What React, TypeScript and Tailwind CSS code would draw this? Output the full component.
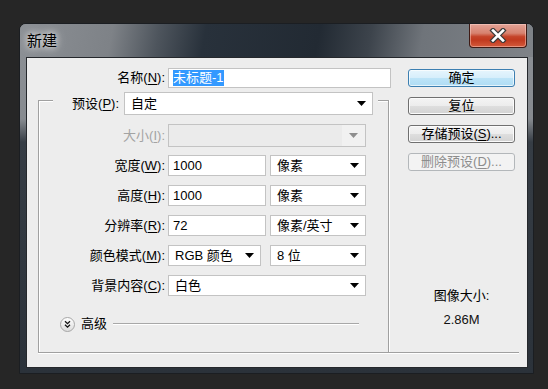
import React from "react";

const F = "font-['Liberation_Sans','Noto_Sans_CJK_SC',sans-serif]";

function Arrow({ disabled }: { disabled?: boolean }) {
  return (
    <svg width="9" height="5" viewBox="0 0 9 5" className="shrink-0">
      <path d="M0 0H9L4.5 5Z" fill={disabled ? "#8e8e8e" : "#000"} />
    </svg>
  );
}

function Label({ text, k, disabled, className }: { text: string; k: string; disabled?: boolean; className: string }) {
  return (
    <div className={`${className} shrink-0 text-right leading-[16px] whitespace-nowrap ${disabled ? "text-[#a3a3a3]" : "text-black"}`}>
      {text}(<span className="underline underline-offset-[2px]">{k}</span>):
    </div>
  );
}

function Field({ value, className }: { value: string; className: string }) {
  return (
    <div className={`${className} shrink-0 flex items-center border border-[#c3c3c3] bg-white pl-[4px] leading-[16px]`}>
      {value}
    </div>
  );
}

function Select({ value, className }: { value: string; className: string }) {
  return (
    <div className={`${className} shrink-0 flex items-center justify-between border border-[#c3c3c3] bg-white pl-[6px] pr-[6px] leading-[16px]`}>
      <span>{value}</span>
      <Arrow />
    </div>
  );
}

function Btn({ children, kind }: { children: React.ReactNode; kind: "default" | "normal" | "disabled" }) {
  if (kind === "default")
    return (
      <div className="h-[18px] flex items-center justify-center rounded-[3px] border border-[#3c7fb1] bg-[linear-gradient(to_bottom,#e6f5fd_0%,#d6eefb_50%,#bde4f8_50%,#aedcf4_100%)] shadow-[inset_0_0_0_1px_#ffffffaa] leading-[16px]">
        {children}
      </div>
    );
  if (kind === "disabled")
    return (
      <div className="h-[18px] flex items-center justify-center rounded-[3px] border border-[#b3b7ba] bg-[#f3f3f3] text-[#8d8d8d] leading-[16px]">
        {children}
      </div>
    );
  return (
    <div className="h-[18px] flex items-center justify-center rounded-[3px] border border-[#707070] bg-[linear-gradient(to_bottom,#f4f4f4_0%,#ececec_50%,#dedede_50%,#d2d2d2_100%)] shadow-[inset_0_0_0_1px_#fbfbfb] leading-[16px]">
      {children}
    </div>
  );
}

function CloseBtn() {
  return (
    <div className="mr-[6px] w-[58px] h-[24px] shrink-0 flex items-center justify-center rounded-b-[4px] border border-t-0 border-[#3e1a14] bg-[linear-gradient(to_bottom,#e3a397_0%,#d7826f_40%,#c5442a_55%,#c13a1f_70%,#d45a3b_100%)] shadow-[inset_0_0_0_1px_rgba(255,220,210,0.45)]">
      <svg width="18" height="15" viewBox="0 0 18 15">
        <path d="M4 2.5L14 12.5M14 2.5L4 12.5" stroke="#3a3a3a" strokeWidth="5" strokeLinecap="square" />
        <path d="M4 2.5L14 12.5M14 2.5L4 12.5" stroke="#ffffff" strokeWidth="2.6" strokeLinecap="square" />
      </svg>
    </div>
  );
}

function AdvIcon() {
  return (
    <svg width="15" height="15" viewBox="0 0 15 15" className="shrink-0">
      <defs>
        <linearGradient id="g" x1="0" y1="0" x2="0" y2="1">
          <stop offset="0" stopColor="#ffffff" />
          <stop offset="1" stopColor="#dcdcdc" />
        </linearGradient>
      </defs>
      <circle cx="7.5" cy="7.5" r="7" fill="url(#g)" stroke="#a6a6a6" />
      <path d="M5 4.2L7.5 6.6L10 4.2M5 7.8L7.5 10.2L10 7.8" fill="none" stroke="#111" strokeWidth="1.3" />
    </svg>
  );
}

export default function App() {
  return (
    <div className={`w-[548px] h-[389px] bg-[#262626] pt-[23px] pl-[19px] ${F} text-[13px] text-black`}>
      <div className="w-[515px] h-[351px] flex flex-col rounded-t-[7px] border border-[#1b1e22] overflow-hidden bg-[linear-gradient(to_bottom,#8d9196_0px,#878b90_95px,#363d45_118px,#2b323a_100%)]">
        {/* title bar */}
        <div className="h-[33px] shrink-0 flex items-start justify-between bg-[linear-gradient(100deg,#8c9095_0%,#7e8287_18%,#4e555d_27%,#28313b_36%,#222a33_58%,#3d444c_68%,#6f747a_78%,#7f8388_100%)]">
          <div className="pl-[7px] h-full flex items-center">
            <span className="text-[15px] leading-[18px] text-black [text-shadow:0_0_6px_rgba(255,255,255,0.95),0_0_12px_rgba(255,255,255,0.7)]">新建</span>
          </div>
          <CloseBtn />
        </div>
        {/* body */}
        <div className="flex-1 flex pl-[6px] pr-[5px] pb-[5px]">
          <div className="w-[502px] h-[311px] border border-[#25282c] bg-[#ededed] flex flex-col">
            <div className="flex h-[294px]">
              {/* left column */}
              <div className="w-[362px] flex flex-col">
                <div className="mt-[10px] h-[20px] flex items-center">
                  <Label text="名称" k="N" className="w-[138px]" />
                  <div className="ml-[3px] w-[223px] h-[20px] shrink-0 flex items-center border border-[#c3c3c3] bg-white pl-[4px]">
                    <span className="bg-[#3399ff] text-white leading-[16px]">未标题-1</span>
                  </div>
                </div>
                {/* group box */}
                <div className="mt-[12px] ml-[11px] w-[351px] flex-1 flex flex-col border-l border-r border-t border-[#a0a0a0] shadow-[inset_1px_1px_0_#ffffff,1px_0_0_#ffffff]">
                  <div className="-mt-[9px] ml-[14px] w-[325px] h-[23px] shrink-0 flex items-center justify-end bg-[#ededed] pr-[5px]">
                    <Label text="预设" k="P" className="" />
                    <div className="ml-[5px] w-[249px] h-[23px] shrink-0 flex items-center justify-between border border-[#c3c3c3] bg-white pl-[6px] pr-[6px] leading-[16px]">
                      <span>自定</span>
                      <Arrow />
                    </div>
                  </div>
                  <div className="mt-[9px] h-[23px] flex items-center">
                    <Label text="大小" k="I" disabled className="w-[126px]" />
                    <div className="ml-[3px] w-[198px] h-[23px] shrink-0 flex items-stretch border border-[#c3c3c3] bg-[#ebebeb]">
                      <div className="flex-1" />
                      <div className="w-[23px] flex items-center justify-center bg-[#f1f1f1]">
                        <Arrow disabled />
                      </div>
                    </div>
                  </div>
                  <div className="mt-[8px] h-[21px] flex items-center">
                    <Label text="宽度" k="W" className="w-[126px]" />
                    <Field value="1000" className="ml-[3px] w-[98px] h-[21px]" />
                    <Select value="像素" className="ml-[4px] w-[96px] h-[21px]" />
                  </div>
                  <div className="mt-[9px] h-[21px] flex items-center">
                    <Label text="高度" k="H" className="w-[126px]" />
                    <Field value="1000" className="ml-[3px] w-[98px] h-[21px]" />
                    <Select value="像素" className="ml-[4px] w-[96px] h-[21px]" />
                  </div>
                  <div className="mt-[9px] h-[21px] flex items-center">
                    <Label text="分辨率" k="R" className="w-[126px]" />
                    <Field value="72" className="ml-[3px] w-[98px] h-[21px]" />
                    <Select value="像素/英寸" className="ml-[4px] w-[96px] h-[21px]" />
                  </div>
                  <div className="mt-[9px] h-[21px] flex items-center">
                    <Label text="颜色模式" k="M" className="w-[126px]" />
                    <Select value="RGB 颜色" className="ml-[3px] w-[93px] h-[21px]" />
                    <Select value="8 位" className="ml-[9px] w-[96px] h-[21px]" />
                  </div>
                  <div className="mt-[9px] h-[21px] flex items-center">
                    <Label text="背景内容" k="C" className="w-[126px]" />
                    <Select value="白色" className="ml-[3px] w-[198px] h-[21px]" />
                  </div>
                  <div className="mt-[20px] h-[16px] flex items-center">
                    <div className="ml-[21px]">
                      <AdvIcon />
                    </div>
                    <span className="ml-[6px] leading-[16px]">高级</span>
                    <div className="ml-[6px] w-[246px] h-0 border-t border-b border-t-[#a8a8a8] border-b-white" />
                  </div>
                </div>
              </div>
              {/* right column */}
              <div className="ml-[19px] w-[107px] flex flex-col">
                <div className="mt-[11px] flex flex-col gap-[10px]">
                  <Btn kind="default">确定</Btn>
                  <Btn kind="normal">复位</Btn>
                  <Btn kind="normal">
                    存储预设(<span className="underline underline-offset-[2px]">S</span>)...
                  </Btn>
                  <Btn kind="disabled">
                    删除预设(<span className="underline underline-offset-[2px]">D</span>)...
                  </Btn>
                </div>
                <div className="mt-[117px] h-[16px] leading-[16px] text-center">图像大小:</div>
                <div className="mt-[8px] h-[16px] leading-[16px] text-center text-[#111]">2.86M</div>
              </div>
            </div>
            <div className="ml-[11px] w-[481px] h-0 border-t border-b border-t-[#a0a0a0] border-b-white" />
          </div>
        </div>
      </div>
    </div>
  );
}
